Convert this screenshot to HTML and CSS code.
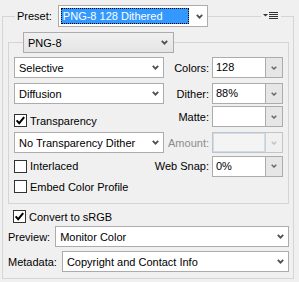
FILE: index.html
```html
<!DOCTYPE html>
<html lang="en">
<head>
  <meta charset="UTF-8">
  <meta name="viewport" content="width=device-width, initial-scale=1.0">
  <title>Optimize Settings</title>
  <link rel="stylesheet" href="styles.css">
</head>
<body>
  <div class="panel">
    <div class="panel-head">
      <span class="head-label">Preset:</span>
      <div class="dropdown preset">
        <span class="selection">PNG-8 128 Dithered</span>
        <svg class="chevron" width="7" height="5" viewBox="0 0 7 5"><polyline points="0.8,0.8 3.5,3.6 6.2,0.8"/></svg>
      </div>
      <span class="head-menu">
        <svg width="15" height="8" viewBox="0 0 15 8">
          <polygon points="0,2 5,2 2.5,4.5" fill="#333"/>
          <rect x="6" y="0" width="9" height="1" fill="#333"/>
          <rect x="6" y="2" width="9" height="1" fill="#333"/>
          <rect x="6" y="4" width="9" height="1" fill="#333"/>
          <rect x="6" y="6" width="9" height="1" fill="#333"/>
        </svg>
      </span>
    </div>

    <div class="group">
      <div class="dropdown format">
        <span class="dropdown-text">PNG-8</span>
        <svg class="chevron" width="7" height="5" viewBox="0 0 7 5"><polyline points="0.8,0.8 3.5,3.6 6.2,0.8"/></svg>
      </div>

      <div class="row row-1">
        <div class="dropdown wide">
          <span class="dropdown-text">Selective</span>
          <svg class="chevron" width="7" height="5" viewBox="0 0 7 5"><polyline points="0.8,0.8 3.5,3.6 6.2,0.8"/></svg>
        </div>
        <div class="pair">
          <span class="pair-label">Colors:</span>
          <div class="combo">
            <span class="combo-value">128</span>
            <span class="combo-btn"><svg class="chevron small" width="6" height="4" viewBox="0 0 6 4"><polyline points="0.7,0.7 3,3 5.3,0.7"/></svg></span>
          </div>
        </div>
      </div>

      <div class="row row-2">
        <div class="dropdown wide">
          <span class="dropdown-text">Diffusion</span>
          <svg class="chevron" width="7" height="5" viewBox="0 0 7 5"><polyline points="0.8,0.8 3.5,3.6 6.2,0.8"/></svg>
        </div>
        <div class="pair">
          <span class="pair-label">Dither:</span>
          <div class="combo">
            <span class="combo-value">88%</span>
            <span class="combo-btn"><svg class="chevron small" width="6" height="4" viewBox="0 0 6 4"><polyline points="0.7,0.7 3,3 5.3,0.7"/></svg></span>
          </div>
        </div>
      </div>

      <div class="row row-3">
        <label class="check low">
          <svg width="13" height="13" viewBox="0 0 13 13"><rect x="0.5" y="0.5" width="12" height="12" fill="#fff" stroke="#333"/><polyline points="2.6,6.4 5.2,9.2 10.2,3.2" fill="none" stroke="#000" stroke-width="2"/></svg>
          <span>Transparency</span>
        </label>
        <div class="pair">
          <span class="pair-label">Matte:</span>
          <div class="combo">
            <span class="combo-value"></span>
            <span class="combo-btn"><svg class="chevron small" width="6" height="4" viewBox="0 0 6 4"><polyline points="0.7,0.7 3,3 5.3,0.7"/></svg></span>
          </div>
        </div>
      </div>

      <div class="row row-4">
        <div class="dropdown wide">
          <span class="dropdown-text">No Transparency Dither</span>
          <svg class="chevron" width="7" height="5" viewBox="0 0 7 5"><polyline points="0.8,0.8 3.5,3.6 6.2,0.8"/></svg>
        </div>
        <div class="pair">
          <span class="pair-label is-disabled">Amount:</span>
          <div class="combo is-disabled">
            <span class="combo-value"></span>
            <span class="combo-btn"><svg class="chevron small" width="6" height="4" viewBox="0 0 6 4"><polyline points="0.7,0.7 3,3 5.3,0.7"/></svg></span>
          </div>
        </div>
      </div>

      <div class="row row-5">
        <label class="check">
          <svg width="13" height="13" viewBox="0 0 13 13"><rect x="0.5" y="0.5" width="12" height="12" fill="#fff" stroke="#333"/></svg>
          <span>Interlaced</span>
        </label>
        <div class="pair">
          <span class="pair-label">Web Snap:</span>
          <div class="combo">
            <span class="combo-value">0%</span>
            <span class="combo-btn"><svg class="chevron small" width="6" height="4" viewBox="0 0 6 4"><polyline points="0.7,0.7 3,3 5.3,0.7"/></svg></span>
          </div>
        </div>
      </div>

      <div class="row row-6">
        <label class="check">
          <svg width="13" height="13" viewBox="0 0 13 13"><rect x="0.5" y="0.5" width="12" height="12" fill="#fff" stroke="#333"/></svg>
          <span>Embed Color Profile</span>
        </label>
      </div>
    </div>

    <label class="check convert">
      <svg width="13" height="13" viewBox="0 0 13 13"><rect x="0.5" y="0.5" width="12" height="12" fill="#fff" stroke="#333"/><polyline points="2.6,6.4 5.2,9.2 10.2,3.2" fill="none" stroke="#000" stroke-width="2"/></svg>
      <span>Convert to sRGB</span>
    </label>

    <div class="field-row">
      <span>Preview:</span>
      <div class="dropdown grow">
        <span class="dropdown-text">Monitor Color</span>
        <svg class="chevron" width="7" height="5" viewBox="0 0 7 5"><polyline points="0.8,0.8 3.5,3.6 6.2,0.8"/></svg>
      </div>
    </div>

    <div class="field-row field-row-last">
      <span>Metadata:</span>
      <div class="dropdown grow">
        <span class="dropdown-text">Copyright and Contact Info</span>
        <svg class="chevron" width="7" height="5" viewBox="0 0 7 5"><polyline points="0.8,0.8 3.5,3.6 6.2,0.8"/></svg>
      </div>
    </div>
  </div>
</body>
</html>
```

FILE: styles.css
```css
/* Reset and Base Styles */
* {
  margin: 0;
  padding: 0;
  box-sizing: border-box;
}

body {
  font-family: 'Liberation Sans', Arial, sans-serif;
  font-size: 11px;
  color: #000;
  background-color: #f0f0f0;
  width: 299px;
  height: 282px;
  overflow: hidden;
}

/* Outer frame */
.panel {
  margin: 16px 5px 0 2px;
  height: 263px;
  border: 1px solid #d5d5d5;
}

.panel-head {
  display: flex;
  align-items: center;
  height: 22px;
  margin-top: -12px;
  padding-left: 12px;
}

.head-label {
  background: #f0f0f0;
  padding: 0 6px 0 2px;
  line-height: 22px;
}

.head-menu {
  display: flex;
  align-items: center;
  height: 22px;
  margin-left: auto;
  margin-right: 12px;
  padding: 0 3px 0 2px;
  background: #f0f0f0;
}

/* Dropdowns */
.dropdown {
  display: flex;
  align-items: center;
  height: 21px;
  padding: 0 4px 0 4px;
  background: #fff;
  border: 1px solid #acacac;
}

.dropdown-text {
  flex: 1;
  white-space: nowrap;
  overflow: hidden;
}

.chevron {
  flex: none;
}

.chevron polyline {
  fill: none;
  stroke: #4f4f4f;
  stroke-width: 1.8;
}

.chevron.small polyline {
  stroke: #6a6a6a;
  stroke-width: 1.5;
}

.preset {
  width: 150px;
  height: 22px;
  padding: 2px 4px 2px 2px;
}

.selection {
  width: 128px;
  height: 100%;
  margin-right: auto;
  padding-left: 2px;
  line-height: 17px;
  color: #fff;
  background: #3399ff;
  outline: 1px dotted #000;
  outline-offset: -1px;
}

.format {
  width: 151px;
  margin: -11px 0 0 9px;
  padding-right: 5px;
  background: linear-gradient(#f0f0f0, #e5e5e5);
}

.wide {
  width: 150px;
}

.grow {
  flex: 1;
}

/* Inner group */
.group {
  margin: 15px 4px 0 5px;
  padding: 0 5px 9px 5px;
  border: 1px solid #d5d5d5;
}

.row {
  display: flex;
  align-items: center;
  justify-content: space-between;
  height: 21px;
}

.row-1 { margin-top: 4px; }
.row-2 { margin-top: 5px; }
.row-3 { margin-top: 2px; }
.row-4 { margin-top: 5px; }
.row-5 { margin-top: 3px; height: 20px; }
.row-6 { margin-top: 3px; height: 15px; }

.pair {
  display: flex;
  align-items: center;
  gap: 3px;
}

.pair-label.is-disabled {
  color: #8d8d8d;
}

.combo {
  display: flex;
  width: 71px;
  height: 21px;
  background: #fff;
  border: 1px solid #acacac;
}

.combo-value {
  flex: 1;
  padding-left: 3px;
  line-height: 19px;
}

.combo-btn {
  display: flex;
  align-items: center;
  justify-content: center;
  width: 17px;
  background: #e6e6e6;
  border-left: 1px solid #acacac;
}

.combo.is-disabled {
  background: #f0f0f0;
  border-color: #c4c4c4;
}

.combo.is-disabled .combo-value {
  border: 1px solid #c9dcf0;
  background: #f4f4f4;
}

.combo.is-disabled .combo-btn {
  background: #f0f0f0;
  border-left-color: #d0d0d0;
}

.combo.is-disabled .chevron polyline {
  stroke: #c2c2c2;
}

/* Checkboxes */
.check {
  display: flex;
  align-items: center;
  gap: 3px;
}

.check svg {
  flex: none;
}

.check.low {
  align-self: flex-end;
}

.convert {
  margin: 6px 0 0 10px;
  height: 13px;
}

/* Bottom fields */
.field-row {
  display: flex;
  align-items: center;
  gap: 5px;
  height: 21px;
  margin: 3px 4px 0 0;
  padding-left: 5px;
}

.field-row-last {
  margin-top: 4px;
}
```
